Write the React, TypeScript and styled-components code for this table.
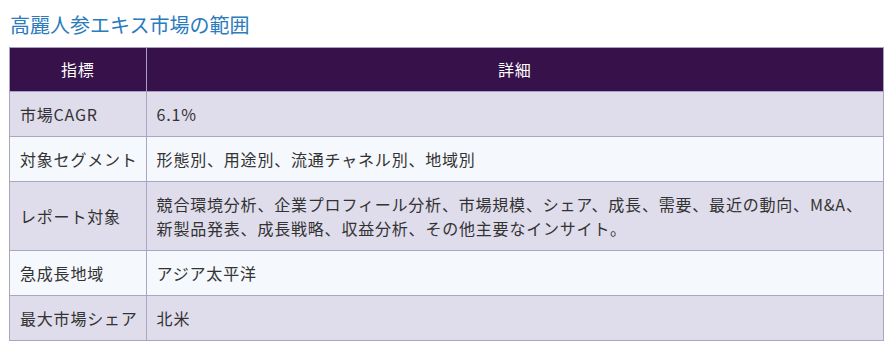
import React from "react";
import styled, { createGlobalStyle } from "styled-components";

const GlobalStyle = createGlobalStyle`
  html, body {
    margin: 0;
    padding: 0;
    background: #ffffff;
  }
  body {
    font-family: "Noto Sans CJK JP", "Noto Sans", sans-serif;
    color: #333333;
  }
`;

const Page = styled.div`
  padding: 9px 6px 0 9px;
`;

const Title = styled.h2`
  margin: 0 0 6px 1px;
  font-size: 20px;
  line-height: 32px;
  font-weight: 400;
  color: #2b7bbd;
`;

const Table = styled.table`
  width: 875px;
  border-collapse: collapse;
  font-size: 16px;
  letter-spacing: 0.8px;
`;

const HeadCell = styled.th`
  background: #36114a;
  color: #ffffff;
  font-weight: 400;
  text-align: center;
  padding: 10px;
  line-height: 23px;
  border: 1px solid #a99fc4;
`;

const Row = styled.tr<{ $alt: boolean }>`
  background: ${(p) => (p.$alt ? "#f5f8fc" : "#dfdceb")};
`;

const Cell = styled.td<{ $label?: boolean }>`
  padding: ${(p) => (p.$label ? "10px 8px 10px 10px" : "10px")};
  line-height: 24px;
  border: 1px solid #aaa6c2;
  vertical-align: middle;
  width: ${(p) => (p.$label ? "116px" : "auto")};
  white-space: ${(p) => (p.$label ? "nowrap" : "normal")};
`;

const rows: [string, string][] = [
  ["市場CAGR", "6.1%"],
  ["対象セグメント", "形態別、用途別、流通チャネル別、地域別"],
  [
    "レポート対象",
    "競合環境分析、企業プロフィール分析、市場規模、シェア、成長、需要、最近の動向、M&A、新製品発表、成長戦略、収益分析、その他主要なインサイト。",
  ],
  ["急成長地域", "アジア太平洋"],
  ["最大市場シェア", "北米"],
];

export default function App() {
  return (
    <Page>
      <GlobalStyle />
      <Title>高麗人参エキス市場の範囲</Title>
      <Table>
        <thead>
          <tr>
            <HeadCell>指標</HeadCell>
            <HeadCell>詳細</HeadCell>
          </tr>
        </thead>
        <tbody>
          {rows.map(([label, value], i) => (
            <Row key={label} $alt={i % 2 === 1}>
              <Cell $label>{label}</Cell>
              <Cell>{value}</Cell>
            </Row>
          ))}
        </tbody>
      </Table>
    </Page>
  );
}
